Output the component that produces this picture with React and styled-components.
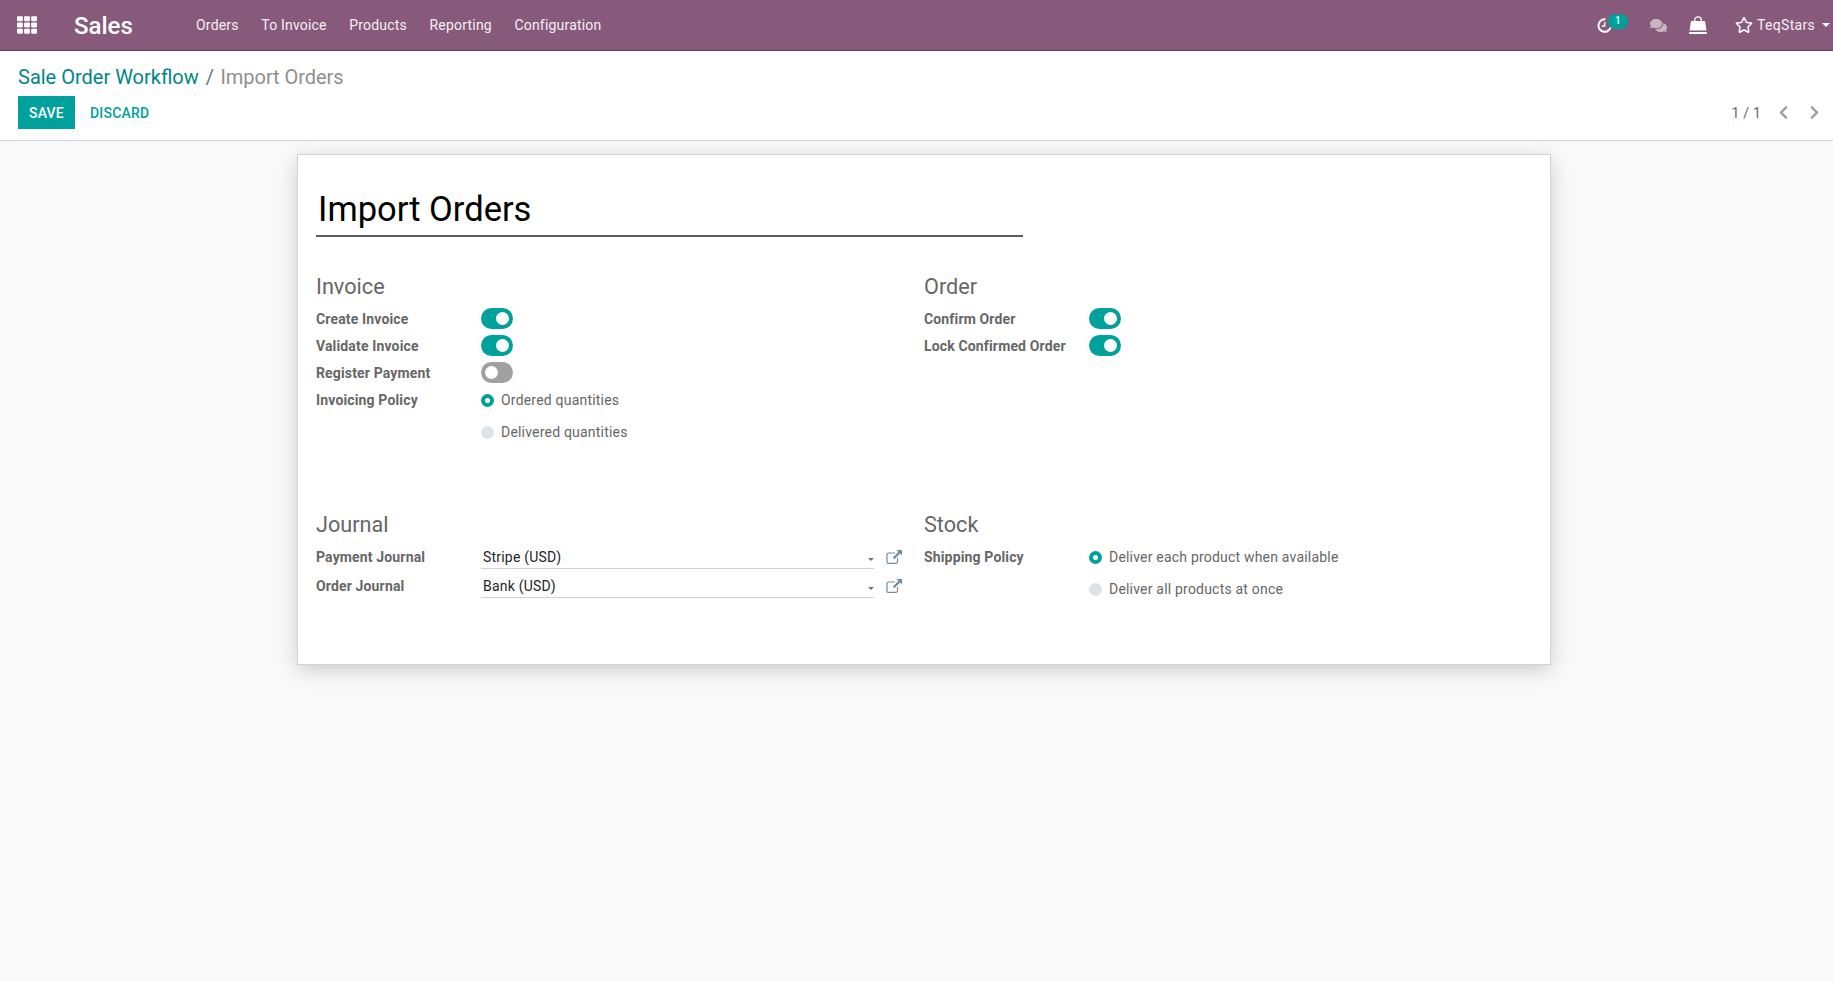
import React from "react";
import styled, { createGlobalStyle } from "styled-components";
import { FaTh, FaComments, FaRegStar, FaChevronLeft, FaChevronRight } from "react-icons/fa";

const Global = createGlobalStyle`
  html, body { margin: 0; padding: 0; height: 100%; }
  body { font-family: Roboto, "Noto Sans", sans-serif; font-size: 14px; letter-spacing: .2px; color: #4c4c4c; background: #f9f9f9; }
  #root { min-height: 981px; display: flex; flex-direction: column; }
`;

const TopBar = styled.header`
  height: 50px; box-sizing: content-box; background: #875a7b; border-bottom: 1px solid #5f4057;
  display: flex; align-items: center; color: #fff; padding: 0 0 0 17px;
`;
const Brand = styled.span`font-size: 24px; font-weight: 500; letter-spacing: 0; margin-left: 37px; width: 122px; line-height: 1; position: relative; top: 1px;`;
const MenuItem = styled.a`font-size: 14px; margin-right: 22.5px; color: #f4eff3;`;
const Spacer = styled.div`flex: 1;`;
const SysTray = styled.div`display: flex; align-items: center; padding-right: 3px;`;
const ClockWrap = styled.span`position: relative; display: flex; width: 15px; height: 15px; margin-right: 38px;`;
const Badge = styled.span`
  position: absolute; left: 11px; top: -4px; width: 20px; height: 15px; border-radius: 8px; background: #00a09d;
  font-size: 10px; font-weight: 500; color: #fff; text-align: center; line-height: 14px;
`;
const TrayIcon = styled.span`display: flex; margin-right: ${p => p.$gap}px; color: ${p => p.$muted ? "#c8b4c3" : "#fff"};`;
const UserName = styled.span`font-size: 14px; margin-left: 4px; color: #f4eff3; letter-spacing: .3px;`;
const Caret = styled.i`
  display: inline-block; width: 0; height: 0; margin-left: 7px; flex: none;
  border-left: ${p => p.$s}px solid transparent; border-right: ${p => p.$s}px solid transparent;
  border-top: ${p => p.$s}px solid ${p => p.$c};
`;
const FieldCaret = styled(Caret)`margin-left: auto; position: relative; top: 2px;`;

const ControlPanel = styled.section`
  height: 89px; background: #fff; border-bottom: 1px solid #ced4da; padding: 0 11px 0 18px;
  display: flex; flex-direction: column;
`;
const Crumbs = styled.div`font-size: 20px; letter-spacing: 0; line-height: 28px; margin-top: 12px; display: flex;`;
const CrumbLink = styled.a`color: #008784;`;
const CrumbSep = styled.span`color: #6c757d; margin: 0 6.5px 0 7px;`;
const CrumbNow = styled.span`color: #8f8f8f; letter-spacing: -.05px;`;
const Actions = styled.div`display: flex; align-items: center; margin-top: 5px;`;
const SaveBtn = styled.button`
  width: 57px; height: 33px; border: 0; background: #00a09d; color: #fff; font: 500 14px Roboto, sans-serif; letter-spacing: .2px; padding: 0;
`;
const DiscardBtn = styled.button`
  border: 0; background: none; color: #00a09d; font: 500 14px Roboto, sans-serif; letter-spacing: .2px; padding: 0; margin-left: 15px;
`;
const Pager = styled.div`margin-left: auto; display: flex; align-items: center; color: #666; font-size: 14px; gap: 15px;`;
const PagerBtns = styled.span`display: flex; gap: 16px; color: #9aa1a8;`;

const Sheet = styled.main`
  box-sizing: border-box; width: 1254px; height: 511px; margin: 13px 0 0 297px; background: #fff;
  border: 1px solid #ced4da; box-shadow: 0 5px 20px -1px rgba(0,0,0,.2); padding: 25px 17px 0 18px;
`;
const TitleField = styled.h1`
  width: 707px; margin: 0; height: 57px; border-bottom: 2px solid #5c5c5c; box-sizing: border-box;
  font-size: 34.5px; letter-spacing: 0; font-weight: 400; color: #000; line-height: 58px; padding-left: 2px;
`;
const Groups = styled.div`display: grid; grid-template-columns: 608px 1fr; margin-top: 35px;`;
const Group = styled.section`min-height: ${p => p.$h || 0}px;`;
const GroupTitle = styled.h2`font-size: 21.67px; letter-spacing: 0; font-weight: 400; color: #666; line-height: 30px; margin: 0 0 3px;`;
const Row = styled.div`display: grid; grid-template-columns: 165px 1fr; min-height: ${p => p.$h || 27}px; align-items: ${p => p.$top ? "start" : "center"};`;
const Label = styled.label`
  font-weight: 700; font-size: 14px; color: #666; line-height: 16px; letter-spacing: .15px;
  margin-top: ${p => p.$top ? 6 : 0}px;
`;
const FieldLabel = styled(Label)`margin-bottom: 2px;`;
const Toggle = styled.span`
  display: block; width: 32px; height: 21px; border-radius: 11px; background: ${p => p.$on ? "#00a09d" : "#a0a0a0"}; position: relative;
  &::after {
    content: ""; position: absolute; top: 4px; left: ${p => p.$on ? 15 : 4}px; width: 13px; height: 13px; border-radius: 50%; background: #fff;
  }
`;
const RadioList = styled.div`display: flex; flex-direction: column; gap: 14px; margin-top: 5px;`;
const RadioRow = styled.div`display: flex; align-items: center; height: 18px; font-size: 14px; color: #666;`;
const RadioDot = styled.span`
  width: 13px; height: 13px; border-radius: 50%; margin-right: 7px; box-sizing: border-box;
  background: ${p => p.$on ? "#fff" : "#dee2e6"}; border: ${p => p.$on ? "4px solid #00a09d" : "0"};
`;
const SelectField = styled.div`
  width: 393px; height: 23px; box-sizing: border-box; border-bottom: 1px solid #ced4da; display: flex; align-items: center;
  padding: 0 0 0 2px; font-size: 14px; color: #212529; margin-right: 12px;
`;
const FieldLine = styled.div`display: flex; align-items: center;`;
const ExtLink = styled.span`display: flex; position: relative; top: -1px;`;

const Clock = () => (
  <svg width="15" height="15" viewBox="0 0 15 15" fill="none" stroke="#fff" strokeWidth="2">
    <path d="M13.6 9.5A6.2 6.2 0 1 1 8.5 1.4" />
    <path d="M7.8 4v4H4.8" strokeWidth="1.3" />
  </svg>
);
const Bag = () => (
  <svg width="18" height="18" viewBox="0 0 18 18">
    <path d="M5.8 6V3.8C5.8 2 7.2.8 9 .8s3.2 1.2 3.2 3V6" fill="none" stroke="#fff" strokeWidth="1.3" />
    <path d="M2 5h14l1.5 9.6H.5z" fill="#fff" />
    <path d="M.2 16h17.6v2H.2z" fill="#fff" />
  </svg>
);
const ExternalLink = () => (
  <svg width="16" height="14" viewBox="0 0 16 14">
    <path d="M9 3H2.6A1.6 1.6 0 0 0 1 4.6v7.3a1.5 1.5 0 0 0 1.6 1.5h7.3a1.6 1.6 0 0 0 1.6-1.5V8" fill="none" stroke="#7c8a96" strokeWidth="1.2" />
    <path d="M10.4 0H16v5.6l-2-2-5.5 5.6-1.6-1.6L12.4 2z" fill="#6f8da3" />
  </svg>
);

const Switch = ({ on }) => <Toggle $on={on} />;

export default function App() {
  return (
    <>
      <Global />
      <TopBar>
        <FaTh size={20} />
        <Brand>Sales</Brand>
        {["Orders", "To Invoice", "Products", "Reporting", "Configuration"].map(m => <MenuItem key={m}>{m}</MenuItem>)}
        <Spacer />
        <SysTray>
          <ClockWrap><Clock /><Badge>1</Badge></ClockWrap>
          <TrayIcon $muted $gap={22}><FaComments size={17} /></TrayIcon>
          <TrayIcon $gap={28}><Bag /></TrayIcon>
          <TrayIcon $gap={0}><FaRegStar size={18} /></TrayIcon>
          <UserName>TeqStars</UserName>
          <Caret $s={4} $c="#fff" />
        </SysTray>
      </TopBar>
      <ControlPanel>
        <Crumbs>
          <CrumbLink>Sale Order Workflow</CrumbLink>
          <CrumbSep>/</CrumbSep>
          <CrumbNow>Import Orders</CrumbNow>
        </Crumbs>
        <Actions>
          <SaveBtn>SAVE</SaveBtn>
          <DiscardBtn>DISCARD</DiscardBtn>
          <Pager>
            <span>1 / 1</span>
            <PagerBtns><FaChevronLeft size={15} /><FaChevronRight size={15} /></PagerBtns>
          </Pager>
        </Actions>
      </ControlPanel>
      <Sheet>
        <TitleField>Import Orders</TitleField>
        <Groups>
          <Group $h={238}>
            <GroupTitle>Invoice</GroupTitle>
            <Row><Label>Create Invoice</Label><Switch on /></Row>
            <Row><Label>Validate Invoice</Label><Switch on /></Row>
            <Row><Label>Register Payment</Label><Switch /></Row>
            <Row $top $h={50}>
              <Label $top>Invoicing Policy</Label>
              <RadioList>
                <RadioRow><RadioDot $on />Ordered quantities</RadioRow>
                <RadioRow><RadioDot />Delivered quantities</RadioRow>
              </RadioList>
            </Row>
          </Group>
          <Group>
            <GroupTitle>Order</GroupTitle>
            <Row><Label>Confirm Order</Label><Switch on /></Row>
            <Row><Label>Lock Confirmed Order</Label><Switch on /></Row>
          </Group>
          <Group>
            <GroupTitle>Journal</GroupTitle>
            <Row $h={29}>
              <FieldLabel>Payment Journal</FieldLabel>
              <FieldLine>
                <SelectField>Stripe (USD)<FieldCaret $s={3.5} $c="#6c757d" /></SelectField>
                <ExtLink><ExternalLink /></ExtLink>
              </FieldLine>
            </Row>
            <Row $h={29}>
              <FieldLabel>Order Journal</FieldLabel>
              <FieldLine>
                <SelectField>Bank (USD)<FieldCaret $s={3.5} $c="#6c757d" /></SelectField>
                <ExtLink><ExternalLink /></ExtLink>
              </FieldLine>
            </Row>
          </Group>
          <Group>
            <GroupTitle>Stock</GroupTitle>
            <Row $top $h={60}>
              <Label $top>Shipping Policy</Label>
              <RadioList>
                <RadioRow><RadioDot $on />Deliver each product when available</RadioRow>
                <RadioRow><RadioDot />Deliver all products at once</RadioRow>
              </RadioList>
            </Row>
          </Group>
        </Groups>
      </Sheet>
    </>
  );
}
